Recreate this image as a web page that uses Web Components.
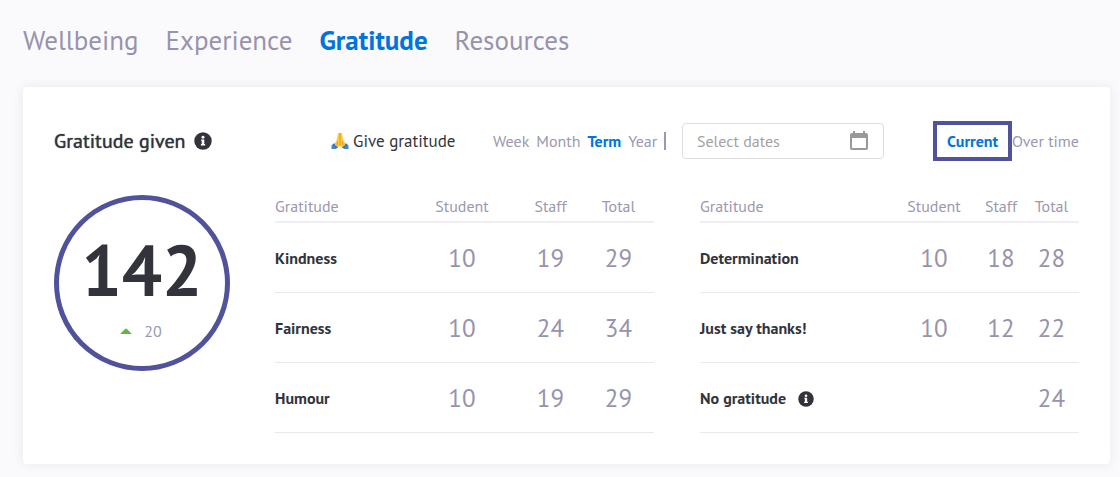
<!DOCTYPE html>
<html lang="en">
<head>
<meta charset="utf-8">
<title>Gratitude</title>
<style>
body { margin: 0; background: #fafafc; font-family: "PT Sans", Lato, sans-serif; color: #33343b; }
</style>
</head>
<body>
<gratitude-page></gratitude-page>
<script>
function define(name, html, setup) {
  const template = document.createElement('template');
  template.innerHTML = html;
  customElements.define(name, class extends HTMLElement {
    constructor() {
      super();
      this.attachShadow({ mode: 'open' }).append(template.content.cloneNode(true));
    }
    connectedCallback() { if (setup) setup(this, this.shadowRoot); }
  });
}

define('info-icon', `
<style>:host { display: inline-flex; width: 16px; height: 16px; } svg { width: 100%; height: 100%; }</style>
<svg viewBox="0 0 512 512" role="img" aria-label="Information"><circle cx="256" cy="256" r="248" fill="#33343b"/><circle cx="256" cy="152" r="42" fill="#fff"/><path fill="#fff" d="M204 214h88v126h24v44H196v-44h24v-82h-16z"/></svg>`);

define('hands-icon', `
<style>:host { display: inline-flex; width: 18px; height: 18px; } svg { width: 100%; height: 100%; }</style>
<svg viewBox="0 0 36 36" aria-hidden="true">
<path fill="#ffc83d" d="M17.500 2C15 1 14 3 13.500 6L11 17 6 25l6 7 6-4 6 4 6-7-5-8-2.500-11C22 3 21 1 18.500 2z"/>
<path fill="none" stroke="#d98a12" stroke-width="1.500" stroke-linecap="round" d="M18 3v24M13 20l-1 6M23 20l1 6"/>
<path fill="#4285ce" d="M6 22 1 27v7h9l4-4q-6-2-8-8zM30 22l5 5v7h-9l-4-4q6-2 8-8z"/>
<path fill="none" stroke="#27609d" stroke-width="1.500" d="M5 24q2 6 8 7M31 24q-2 6-8 7"/>
</svg>`);

define('page-tabs', `
<style>
:host { display: block; }
nav { display: flex; gap: 27px; font-size: 27px; line-height: 32px; }
::slotted(a) { color: #9793ac; text-decoration: none; }
::slotted(a[aria-current]) { color: #0073dc; font-weight: 700; }
</style>
<nav aria-label="Sections"><slot></slot></nav>`);

define('option-group', `
<style>
:host { display: flex; align-items: center; font-size: 16px; line-height: 20px; }
::slotted(button) { font: inherit; color: #9b98af; background: none; border: 0; padding: 0; margin: 0 7px 0 0; white-space: nowrap; cursor: pointer; }
::slotted(button[aria-pressed="true"]) { color: #0073dc; font-weight: 700; }
:host([boxed]) { justify-content: flex-end; }
:host([boxed]) ::slotted(button) { margin: 0; }
:host([boxed]) ::slotted(button[aria-pressed="true"]) { border: 4px solid #50529b; padding: 6px 10px; line-height: 20px; }
:host([divided])::after { content: ""; width: 2px; height: 18px; background: #9b98af; }
</style>
<slot></slot>`);

define('date-field', `
<style>
:host { display: block; min-width: 0; }
label { display: flex; align-items: center; box-sizing: border-box; height: 36px; padding: 0 14px; border: 1px solid #dedede; border-radius: 4px; background: #fff; }
input { flex: 1; width: 100%; min-width: 0; padding: 0; border: 0; outline: 0; background: none; font: inherit; font-size: 16px; line-height: 20px; color: #33343b; }
input::placeholder { color: #a2a2a2; opacity: 1; }
svg { flex: none; width: 20px; height: 20px; }
</style>
<label><input type="text" placeholder="Select dates" aria-label="Select dates">
<svg viewBox="0 0 20 20" aria-hidden="true"><path fill="#999" fill-rule="evenodd" d="M4 0h2v2h8V0h2v2h1q2 0 2 2v13q0 2-2 2H3q-2 0-2-2V4q0-2 2-2h1zM3 7v10h14V7z"/></svg></label>`);

define('score-ring', `
<style>
:host { display: flex; flex-direction: column; align-items: center; box-sizing: border-box; width: 176px; height: 176px; padding-top: 34px; border: 5px solid #50529b; border-radius: 50%; }
.total { font-size: 71px; line-height: 72px; font-weight: 700; }
.change { display: flex; align-items: center; gap: 12px; margin-top: 15px; padding-right: 2px; font-size: 16px; line-height: 20px; color: #9b98af; }
svg { width: 12px; height: 6px; }
</style>
<div class="total"><slot></slot></div>
<div class="change"><svg viewBox="0 0 12 6" role="img" aria-label="Up"><path fill="#61b746" d="M1 6Q0 6 1 5L5 1Q6 0 7 1L11 5Q12 6 11 6z"/></svg><slot name="change"></slot></div>`);

define('gratitude-table', `
<style>
:host { display: block; }
table { width: 100%; border-collapse: separate; border-spacing: 0; table-layout: fixed; }
th, td { padding: 0; text-align: center; }
thead th { height: 27px; padding-bottom: 5px; vertical-align: bottom; border-bottom: 2px solid #efeff1; font-size: 16px; line-height: 20px; font-weight: 400; color: #9b98af; }
tbody th { font-size: 16px; line-height: 20px; font-weight: 700; }
tr > :first-child { text-align: left; }
tbody th, td { height: 69px; border-bottom: 1px solid #e9e9eb; }
td { font-size: 25px; line-height: 28px; color: #9793ac; }
.student { width: 92px; } .staff { width: 85px; } .total { width: 61px; }
tr > :last-child { padding-right: 10px; }
:host([compact]) .student { width: 88px; }
:host([compact]) .staff { width: 46px; }
:host([compact]) .total { width: 55px; }
:host([compact]) tr > :last-child { padding-right: 0; }
info-icon { margin-left: 12px; vertical-align: -3px; }
</style>
<table><colgroup><col><col class="student"><col class="staff"><col class="total"></colgroup>
<thead><tr><th scope="col">Gratitude</th><th scope="col">Student</th><th scope="col">Staff</th><th scope="col">Total</th></tr></thead>
<tbody></tbody></table>`, (host, root) => {
  const body = root.querySelector('tbody');
  body.replaceChildren();
  for (const line of host.getAttribute('rows').split(';')) {
    const [name, ...values] = line.split(',');
    const row = body.insertRow();
    const head = document.createElement('th');
    head.scope = 'row';
    head.textContent = name;
    if (name === 'No gratitude') head.append(document.createElement('info-icon'));
    row.append(head);
    for (const value of values) row.insertCell().textContent = value;
  }
});

define('gratitude-card', `
<style>
:host { display: block; padding: 35px 31px 31px; background: #fff; border-radius: 4px; box-shadow: 0 0 12px rgba(40, 40, 70, .08); }
header { display: grid; grid-template: 38px / 277fr 162fr 189fr 202fr 195fr; align-items: center; }
h2 { display: flex; align-items: center; gap: 8px; margin: 0; font-size: 20px; line-height: 24px; font-weight: 400; text-shadow: 0 0 1px currentColor; }
h2 info-icon { width: 18px; height: 18px; }
.give { justify-self: start; display: flex; align-items: center; gap: 4px; padding: 0; border: 0; background: none; font: inherit; font-size: 17px; line-height: 20px; color: inherit; white-space: nowrap; cursor: pointer; }
.body { display: grid; grid-template-columns: 175px 1fr 1fr; column-gap: 46px; align-items: start; margin-top: 29px; }
score-ring { margin-top: 6px; }
</style>
<header>
<h2>Gratitude given <info-icon></info-icon></h2>
<button type="button" class="give"><hands-icon></hands-icon>Give gratitude</button>
<option-group divided role="group" aria-label="Period"><button type="button">Week</button><button type="button">Month</button><button type="button" aria-pressed="true">Term</button><button type="button">Year</button></option-group>
<date-field></date-field>
<option-group boxed role="group" aria-label="View"><button type="button" aria-pressed="true">Current</button><button type="button">Over time</button></option-group>
</header>
<div class="body">
<score-ring>142<span slot="change">20</span></score-ring>
<gratitude-table rows="Kindness,10,19,29;Fairness,10,24,34;Humour,10,19,29"></gratitude-table>
<gratitude-table compact rows="Determination,10,18,28;Just say thanks!,10,12,22;No gratitude,,,24"></gratitude-table>
</div>`);

define('gratitude-page', `
<style>:host { display: block; padding: 24px 10px 14px 23px; } gratitude-card { margin-top: 31px; }</style>
<page-tabs><a href="#wellbeing">Wellbeing</a><a href="#experience">Experience</a><a href="#gratitude" aria-current="page">Gratitude</a><a href="#resources">Resources</a></page-tabs>
<gratitude-card></gratitude-card>`);
</script>
</body>
</html>
